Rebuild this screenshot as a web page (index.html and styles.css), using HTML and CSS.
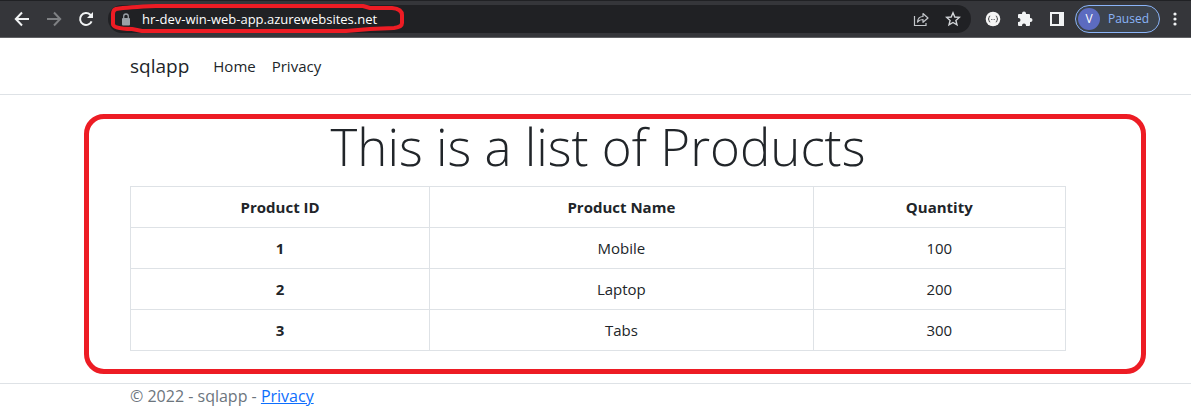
FILE: index.html
```html
<!DOCTYPE html>
<html lang="en">
<head>
<meta charset="utf-8">
<title>sqlapp</title>
<link rel="stylesheet" href="styles.css">
</head>
<body>
<div class="toolbar">
  <button class="tool" aria-label="Back"><svg width="16" height="16" viewBox="0 0 16 16" fill="none" stroke="#f1f3f4" stroke-width="2"><path d="M15 8H2M8 1.500L1.800 8L8 14.500"/></svg></button>
  <button class="tool" aria-label="Forward"><svg width="16" height="16" viewBox="0 0 16 16" fill="none" stroke="#7f8184" stroke-width="2"><path d="M1 8H14M8 1.500L14.200 8L8 14.500"/></svg></button>
  <button class="tool" aria-label="Reload"><svg width="16" height="16" viewBox="0 0 16 16" fill="none" stroke="#f1f3f4" stroke-width="2"><path d="M13.600 10.300A6 6 0 1 1 12.300 3.700L13.800 5.200"/><path d="M15 1V7H9Z" fill="#f1f3f4" stroke="none"/></svg></button>
  <div class="address">
    <svg class="lock" width="10" height="13" viewBox="0 0 10 13"><rect x="1" y="5" width="8" height="7.500" rx="1" fill="#9aa0a6"/><path d="M2.700 5.500V3.300a2.300 2.300 0 0 1 4.600 0V5.500" fill="none" stroke="#9aa0a6" stroke-width="1.300"/></svg>
    <input class="url" type="text" aria-label="Address" value="hr-dev-win-web-app.azurewebsites.net">
    <button class="mini" aria-label="Share"><svg width="16" height="16" viewBox="0 0 16 16" fill="none" stroke="#c4c7cb" stroke-width="1.200"><path d="M1.500 5V14.500H13V12"/><path d="M4.500 11C4.800 7.500 7 5.500 10 5.500V2.500L15 7L10 11.300V8.500C7.500 8.500 6 9.200 4.500 11Z" stroke-linejoin="round"/></svg></button>
    <button class="mini" aria-label="Bookmark"><svg width="16" height="16" viewBox="0 0 16 16" fill="none" stroke="#d3d6d9" stroke-width="1.400"><path d="M8 1.800L9.800 6L14.300 6.400L10.900 9.400L12 13.900L8 11.500L4 13.900L5.100 9.400L1.700 6.400L6.200 6Z"/></svg></button>
  </div>
  <div class="extensions">
    <button class="mini" aria-label="JSON viewer"><svg width="16" height="16" viewBox="0 0 16 16"><circle cx="8" cy="8" r="7.300" fill="#f5f5f5"/><path d="M5.200 5Q4 5 4 6.500T3 8Q4 8 4 9.500T5.200 11M10.800 5Q12 5 12 6.500T13 8Q12 8 12 9.500T10.800 11" fill="none" stroke="#3c3d40"/><path d="M6 8.500H7M7.500 8.500H8.500M9 8.500H10" stroke="#77797c"/></svg></button>
    <button class="mini" aria-label="Extensions"><svg width="16" height="16" viewBox="0 0 16 16"><path d="M1 4Q1 3 2 3H5V2.500a2 2 0 0 1 4 0V3H12Q13 3 13 4V7H13.500a2 2 0 0 1 0 4H13V14Q13 15 12 15H9V14.500a2 2 0 0 0-4 0V15H2Q1 15 1 14V11H1.500a2 2 0 0 0 0-4H1Z" fill="#f1f3f4"/></svg></button>
    <button class="mini" aria-label="Side panel"><svg width="16" height="16" viewBox="0 0 16 16"><path fill-rule="evenodd" d="M1 1H15V15H1ZM3 3V13H10V3Z" fill="#f1f3f4"/></svg></button>
  </div>
  <button class="profile"><span class="avatar">V</span><span>Paused</span></button>
  <button class="more" aria-label="Menu"><svg width="4" height="14" viewBox="0 0 4 14" fill="#f1f3f4"><circle cx="2" cy="2" r="1.600"/><circle cx="2" cy="7" r="1.600"/><circle cx="2" cy="12" r="1.600"/></svg></button>
  <svg class="url-mark" width="298" height="31" viewBox="0 0 298 31" fill="none" stroke="#ed1c24" stroke-width="4" stroke-linejoin="round"><path d="M8 6Q20 4 48 3H255L262 5H284Q294 6 294 12V20Q294 24 286 25L262 26L238 28H34L24 26Q5 26 5 21V11Q5 7 8 6Z"/></svg>
</div>
<header class="site-header">
  <nav class="container nav">
    <a class="brand" href="#">sqlapp</a>
    <a class="nav-link" href="#">Home</a>
    <a class="nav-link" href="#">Privacy</a>
  </nav>
</header>
<main class="main">
  <div class="container">
    <h1 class="title">This is a list of Products</h1>
    <table class="products">
      <colgroup><col class="col-id"><col class="col-name"><col class="col-qty"></colgroup>
      <thead><tr><th scope="col">Product ID</th><th scope="col">Product Name</th><th scope="col">Quantity</th></tr></thead>
      <tbody>
        <tr><th scope="row">1</th><td>Mobile</td><td>100</td></tr>
        <tr><th scope="row">2</th><td>Laptop</td><td>200</td></tr>
        <tr><th scope="row">3</th><td>Tabs</td><td>300</td></tr>
      </tbody>
    </table>
  </div>
  <div class="list-mark"></div>
</main>
<footer class="footer">
  <div class="container">© 2022 - sqlapp - <a class="footer-link" href="#">Privacy</a></div>
</footer>
</body>
</html>
```
FILE: styles.css
```css
* { box-sizing: border-box; }
body {
  margin: 0;
  background: #fff;
  color: #212529;
  font-family: "Open Sans", "Noto Sans", sans-serif;
  font-size: 15px;
  line-height: 24px;
}
button { border: 0; padding: 0; background: none; font: inherit; }
svg { display: block; }

.toolbar {
  position: relative;
  display: flex;
  align-items: center;
  height: 38px;
  padding: 0 14px;
  background: #35363a;
  border-top: 1px solid #202124;
  border-bottom: 1px solid #606164;
}
.tool { margin-right: 16px; }
.tool:nth-child(3) { margin-right: 14px; }
.address {
  display: flex;
  flex: 1;
  align-items: center;
  gap: 16px;
  height: 28px;
  padding: 0 10px 0 13px;
  border-radius: 14px;
  background: #202124;
}
.url {
  flex: 1;
  min-width: 0;
  margin-left: -5px;
  padding: 0;
  border: 0;
  outline: 0;
  background: none;
  color: #fff;
  font: 500 13px/20px "Open Sans", "Noto Sans", sans-serif;
}
.extensions { display: flex; gap: 16px; margin: 0 10px 0 14px; }
.profile {
  display: flex;
  align-items: center;
  gap: 8px;
  height: 28px;
  padding: 0 10px 0 2px;
  border: 1px solid #8ab4f8;
  border-radius: 14px;
  background: #3c434c;
  color: #8ab4f8;
  font-size: 12px;
}
.avatar {
  width: 22px;
  height: 22px;
  border-radius: 50%;
  background: #5c6bc0;
  color: #fff;
  line-height: 22px;
  text-align: center;
}
.more { margin-left: 13px; }
.url-mark { position: absolute; left: 108px; top: 2px; }

.container { max-width: 936px; margin: 0 auto; }
.site-header, .main, .footer { padding-left: 5px; }
.site-header { border-bottom: 1px solid #dee2e6; }
.nav { display: flex; align-items: center; height: 56px; }
.nav-link, .brand { color: #212529; text-decoration: none; }
.brand { margin-right: 24px; font-size: 19px; }
.nav-link { margin-right: 16px; }

.main { position: relative; padding-top: 16px; padding-bottom: 32px; }
.title {
  margin: 0 0 4px;
  font-size: 51px;
  font-weight: 300;
  line-height: 71px;
  text-align: center;
}
.products {
  width: 100%;
  border-collapse: collapse;
  table-layout: fixed;
  text-align: center;
}
.products th, .products td { padding: 8px; border: 1px solid #dee2e6; }
.products th { font-weight: 700; }
.col-id { width: 32%; }
.col-name { width: 41%; }
.col-qty { width: 27%; }
.list-mark {
  position: absolute;
  inset: 19px 45px 9px 84px;
  border: 5px solid #ed1c24;
  border-radius: 20px;
  pointer-events: none;
}
.footer { border-top: 1px solid #dee2e6; color: #6c757d; font-size: 16px; }
.footer-link { color: #0d6efd; }
```
